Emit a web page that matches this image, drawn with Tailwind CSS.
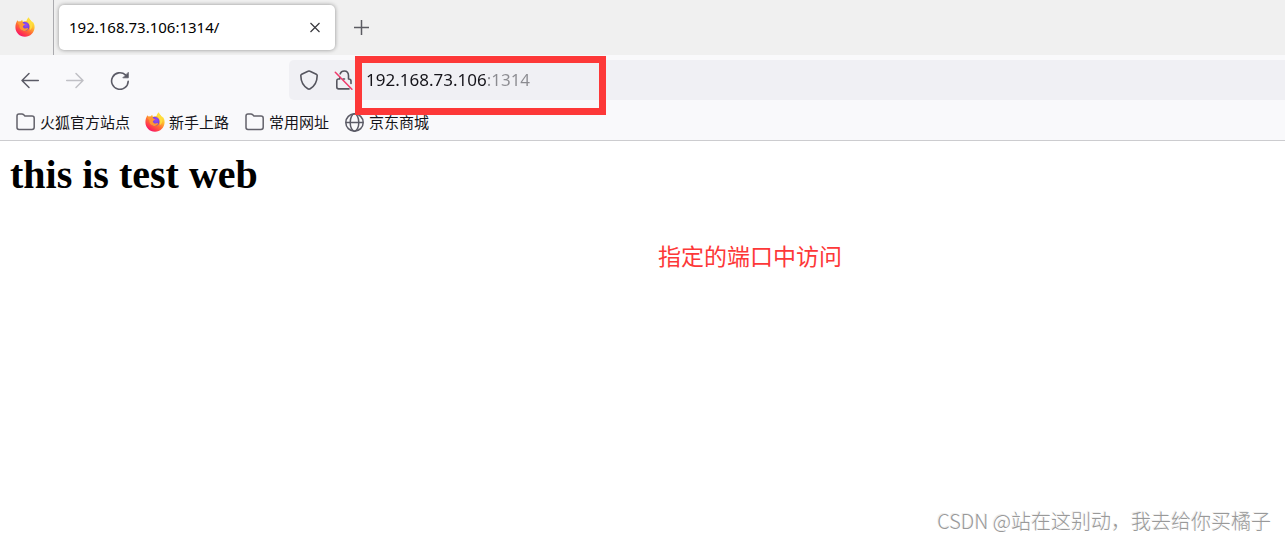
<!DOCTYPE html>
<html lang="zh-CN">
<head>
<meta charset="utf-8">
<meta name="viewport" content="width=device-width, initial-scale=1">
<title>192.168.73.106:1314/</title>
<script src="https://cdn.jsdelivr.net/npm/@tailwindcss/browser@4"></script>
</head>
<body class="relative flex min-h-screen flex-col overflow-x-hidden bg-white font-['Noto_Sans','Noto_Sans_CJK_SC',sans-serif] text-[#15141a]">
<svg class="absolute size-0" aria-hidden="true">
  <defs>
    <linearGradient id="flame" x1="0.8" y1="0.1" x2="0.25" y2="0.95">
      <stop offset="0" stop-color="#fff044"/><stop offset="0.3" stop-color="#ffbd2e"/><stop offset="0.6" stop-color="#ff6a35"/><stop offset="0.85" stop-color="#ff3350"/><stop offset="1" stop-color="#f5156c"/>
    </linearGradient>
    <radialGradient id="core" cx="0.6" cy="0.35" r="0.7">
      <stop offset="0" stop-color="#a04cf0"/><stop offset="0.6" stop-color="#7542e5"/><stop offset="1" stop-color="#5b3bb5"/>
    </radialGradient>
    <symbol id="firefox" viewBox="0 0 20 20">
      <path d="M2.6 3.2C3 4 3.4 4.400 3.900 4.700L5.600 4.600C6 3.700 6.700 3 7.400 2.700C7.200 3.600 7.500 4.200 8 4.700L11.500 4C12 2.500 12.600 1 14 0.300C14 2 15 2.800 16.200 4C16.700 4.500 17 5 17.200 5.500L17.500 4.500C19 6.300 19.700 8.200 19.600 10.500C19.400 15.600 15.200 19.700 10 19.700C4.600 19.700 0.400 15.500 0.400 10.200C0.400 7.400 1.100 5 2.600 3.200Z" fill="url(#flame)"/>
      <path d="M7.600 5.200C9.800 4 13 5 14 7.300C15.400 10.500 13.400 14 10.200 14C7.200 14 5.400 11.800 5.900 9.400C6.400 8.900 7.100 8.900 7.800 9C8.700 8.400 9.700 8 9.900 7.100C9 6.900 8 6.700 7.600 5.200Z" fill="url(#core)"/>
      <path d="M2.500 5.200C4.200 4.200 6 4.500 7.300 5.500C7.700 6.700 8.700 6.900 9.900 7.100C9.700 8 8.500 8.300 7.900 9C7.700 10.200 8.600 11.300 10 11.500C11.400 11.700 12.200 10.800 13.100 11.200C12.600 13.200 10.700 14.300 8.700 13.900C5.500 13.400 4 10.500 4.400 8C3.500 7.500 2.700 6.500 2.500 5.200Z" fill="#ff9634"/>
      <path d="M13.900 0.500C14 2.500 17.200 3.600 17.400 7.300C17.600 10 16.400 12.300 14.700 13.400C15.500 10.700 15.400 8.200 13.900 6.500C12.400 4.700 12 2.500 13.900 0.500Z" fill="#ffdc3e"/>
    </symbol>
    <symbol id="folder" viewBox="0 0 20 20">
      <path d="M1 15.500V4Q1 2 3 2H6Q6.900 2 7.500 2.600L8.900 4.100H16Q18.200 4.100 18.200 6.200V15.300Q18.200 17.400 16 17.400H3Q1 17.400 1 15.500Z" fill="none" stroke="#63626b" stroke-width="1.500"/>
    </symbol>
  </defs>
</svg>

<header>
  <div class="flex h-[55px] items-center bg-[#f0f0f0]">
    <button aria-label="Firefox" class="flex h-full w-[54px] items-center border-r border-[#aaaaae] pb-px pl-[15px]">
      <svg class="size-5"><use href="#firefox"/></svg>
    </button>
    <div class="ml-[5px] flex h-[45px] w-[276px] items-center justify-between rounded-[5px] bg-white pr-[11px] pb-0.5 pl-[10px] shadow-[0_0_4px_rgba(0,0,0,0.4)]">
      <span class="text-[15px] leading-5 text-black">192.168.73.106:1314/</span>
      <button aria-label="关闭标签页" class="flex size-[18px] items-center justify-center">
        <svg class="size-[18px]" viewBox="0 0 18 18" fill="none" stroke="#38383d" stroke-width="1.200"><path d="M4.500 5L13.500 14M13.500 5L4.500 14"/></svg>
      </button>
    </div>
    <button aria-label="新建标签页" class="ml-[18px] pb-px">
      <svg class="size-4" viewBox="0 0 16 16" fill="none" stroke="#5b5b62" stroke-width="1.500"><path d="M8.500 1V16M1 8.500H16"/></svg>
    </button>
  </div>

  <div class="flex h-[50px] items-center bg-[#f9f9fb]">
    <nav class="flex gap-[25px] pl-5">
      <button aria-label="后退"><svg class="size-5" viewBox="0 0 20 20" fill="none" stroke="#5b5b66" stroke-width="1.500" stroke-linecap="round" stroke-linejoin="round"><path d="M18.300 10.500H2M9 3.500L2 10.500L9 17.500"/></svg></button>
      <button aria-label="前进" disabled><svg class="size-5" viewBox="0 0 20 20" fill="none" stroke="#c0c0c5" stroke-width="1.500" stroke-linecap="round" stroke-linejoin="round"><path d="M1.700 10.500H18M11 3.500L18 10.500L11 17.500"/></svg></button>
      <button aria-label="刷新"><svg class="size-5" viewBox="0 0 20 20" fill="none" stroke="#5b5b66" stroke-width="1.600" stroke-linecap="round"><path d="M18.200 11.200A8.300 8.300 0 1 1 15.500 4.900"/><path d="M18.300 2.700V7.800H13.200Z" fill="#5b5b66" stroke-width="0.800" stroke-linejoin="round"/></svg></button>
    </nav>
    <div class="ml-[159px] flex h-10 flex-1 items-center rounded-l-[5px] bg-[#f0f0f4] pl-[10px]">
      <svg class="size-5 shrink-0" viewBox="0 0 20 20" fill="none" stroke="#55555e" stroke-width="1.600" stroke-linejoin="round"><path d="M10 1Q10.500 1 11 1.300L17.300 4.200Q18.200 4.700 18.200 5.600C18.100 11.500 15.700 16.200 11.200 18.800Q10 19.500 8.800 18.800C4.300 16.200 1.900 11.500 1.800 5.600Q1.800 4.700 2.700 4.200L9 1.300Q9.500 1 10 1Z"/></svg>
      <svg class="ml-[15px] size-5 shrink-0" viewBox="0 0 20 20" fill="none" stroke="#55555e" stroke-width="1.600" stroke-linecap="round"><path d="M6.200 3.800Q7.300 1 10.200 1Q14.500 1 14.500 5.800V9M14.500 9Q17 9 17 11V13.500M5.800 9H4.200Q2.800 9.100 2.800 10.800V17Q2.800 18.900 4.700 18.900H15M5.800 9V7.200M9 9H10.500"/><path d="M1.300 2.200L17.900 19.300" stroke="#f0396a" stroke-width="1.500"/></svg>
      <input aria-label="地址" type="text" value="192.168.73.106:1314" class="ml-3 min-w-0 flex-1 bg-[linear-gradient(to_right,#15141a_121px,#8b8b90_121px)] bg-clip-text text-[17px] leading-6 text-transparent outline-none">
    </div>
  </div>

  <nav class="flex h-9 items-center gap-4 border-b border-[#cccccf] bg-[#f9f9fb] pb-px pl-4 text-[15px] leading-5 text-[#15141a]">
    <a href="#" class="flex items-center gap-1"><svg class="size-5"><use href="#folder"/></svg>火狐官方站点</a>
    <a href="#" class="-ml-px flex items-center gap-1"><svg class="size-5"><use href="#firefox"/></svg>新手上路</a>
    <a href="#" class="flex items-center gap-1"><svg class="size-5"><use href="#folder"/></svg>常用网址</a>
    <a href="#" class="flex items-center gap-1"><svg class="size-5" viewBox="0 0 20 20" fill="none" stroke="#5b5b66" stroke-width="1.500"><circle cx="9.500" cy="10.500" r="8.700"/><ellipse cx="9.500" cy="10.500" rx="4.300" ry="8.700"/><path d="M0.800 10.500H18.200"/></svg>京东商城</a>
  </nav>
</header>
<div class="pointer-events-none absolute top-14 left-[355px] h-[59px] w-[251px] border-[7px] border-[#fd3838]"></div>

<main class="flex flex-1 flex-col">
  <h1 class="mt-[11px] pl-[10px] font-['Liberation_Serif',serif] text-[40px] leading-[46px] font-bold text-black">this is test web</h1>
  <p class="mt-11 pl-[658px] text-[23px] leading-7 whitespace-nowrap text-[#fd3838]">指定的端口中访问</p>
  <p class="mt-auto pr-[14px] pb-1 text-right font-['Noto_Sans_CJK_SC',sans-serif] text-[20px] leading-7 font-light text-[#999999] [text-shadow:-1px_-1px_0_#eeeeee]">CSDN @站在这别动，我去给你买橘子</p>
</main>
</body>
</html>
